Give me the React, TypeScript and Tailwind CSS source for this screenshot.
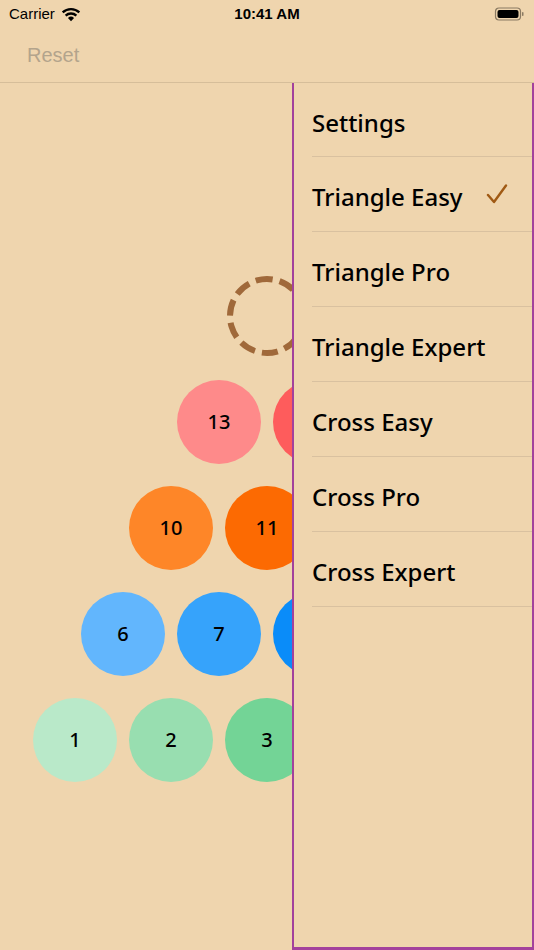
import React from 'react';

const rows: { n: number; color: string }[][] = [
  [
    { n: 13, color: 'bg-[#fe8a8a]' },
    { n: 14, color: 'bg-[#fe5c5c]' },
  ],
  [
    { n: 10, color: 'bg-[#fe8628]' },
    { n: 11, color: 'bg-[#fc6a02]' },
    { n: 12, color: 'bg-[#e85a00]' },
  ],
  [
    { n: 6, color: 'bg-[#62b6fd]' },
    { n: 7, color: 'bg-[#36a3fb]' },
    { n: 8, color: 'bg-[#0a8cf9]' },
    { n: 9, color: 'bg-[#0676d6]' },
  ],
  [
    { n: 1, color: 'bg-[#b9e9c9]' },
    { n: 2, color: 'bg-[#98deb0]' },
    { n: 3, color: 'bg-[#73d496]' },
    { n: 4, color: 'bg-[#52c97d]' },
    { n: 5, color: 'bg-[#36bb66]' },
  ],
];

const menu = ['Settings', 'Triangle Easy', 'Triangle Pro', 'Triangle Expert', 'Cross Easy', 'Cross Pro', 'Cross Expert'];

function StatusBar() {
  return (
    <div className="relative flex h-[28px] items-center justify-between px-[9px] text-[15px] text-black" style={{ fontFamily: '"Liberation Sans", Arial, sans-serif' }}>
      <div className="flex items-center gap-[6px]">
        <span>Carrier</span>
        <svg width="20" height="15" viewBox="0 0 19 14">
          <path d="M9.5 13.5 L6.6 10.3 A4.2 4.2 0 0 1 12.4 10.3 Z" fill="#000" />
          <path d="M4.4 8.1 A7.4 7.4 0 0 1 14.6 8.1" stroke="#000" strokeWidth="2.2" fill="none" />
          <path d="M1.6 5 A11.4 11.4 0 0 1 17.4 5" stroke="#000" strokeWidth="2.2" fill="none" />
        </svg>
      </div>
      <span className="absolute left-1/2 -translate-x-1/2 font-bold">10:41 AM</span>
      <svg width="31" height="14" viewBox="0 0 30 14">
        <rect x="1" y="1" width="25" height="12" rx="3.5" fill="none" stroke="#8a7a62" strokeWidth="1.2" />
        <rect x="3" y="3" width="21" height="8" rx="2" fill="#000" />
        <rect x="27.5" y="5" width="1.5" height="4" rx="0.7" fill="#8a7a62" />
      </svg>
    </div>
  );
}

function Board() {
  return (
    <div className="flex flex-col items-center gap-[22px] pt-[191px]">
      <svg width="84" height="84" viewBox="0 0 84 84">
        <circle cx="42" cy="42" r="37" fill="none" stroke="#a0693a" strokeWidth="6" strokeDasharray="16 7.1" transform="rotate(-106 42 42)" />
      </svg>
      {rows.map((row, i) => (
        <div key={i} className="flex gap-[12px]">
          {row.map((b) => (
            <div
              key={b.n}
              className={`flex h-[84px] w-[84px] items-center justify-center rounded-full ${b.color} text-[20px] font-medium text-black`}
              style={{ fontFamily: '"Comic Sans MS", "Noto Sans", sans-serif' }}
            >
              {b.n}
            </div>
          ))}
        </div>
      ))}
    </div>
  );
}

function SideMenu() {
  return (
    <div className="absolute bottom-0 left-[292px] right-0 top-[83px] border-b-[3px] border-l-2 border-r-2 border-[#a3419c] bg-[#efd5ae]">
      <div className="flex flex-col pl-[18px]" style={{ fontFamily: '"Comic Sans MS", "Noto Sans", sans-serif' }}>
        {menu.map((item, i) => (
          <div key={item} className={`flex items-center justify-between border-b border-[#d9c1a0] pr-[24px] pt-[6px] text-[24px] font-medium text-black ${i === 0 ? 'h-[74px]' : 'h-[75px]'}`}>
            <span>{item}</span>
            {item === 'Triangle Easy' && (
              <svg width="22" height="20" viewBox="0 0 22 20" className="-mt-[6px]">
                <path d="M2 11 L8 18 L20 1.5" fill="none" stroke="#a05a14" strokeWidth="2.4" strokeLinecap="round" strokeLinejoin="round" />
              </svg>
            )}
          </div>
        ))}
      </div>
    </div>
  );
}

export default function App() {
  return (
    <div className="relative h-[950px] w-[534px] overflow-hidden bg-[#efd5ae]">
      <StatusBar />
      <div className="flex h-[55px] items-center border-b border-[#d6be9a] px-[27px]">
        <span className="text-[20px] text-[#b3a48c]" style={{ fontFamily: '"Liberation Sans", Arial, sans-serif' }}>Reset</span>
      </div>
      <Board />
      <SideMenu />
    </div>
  );
}
